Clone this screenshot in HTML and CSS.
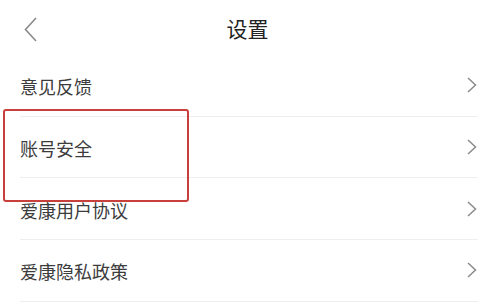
FILE: index.html
```html
<!DOCTYPE html>
<html lang="zh">
<head>
<meta charset="utf-8">
<link rel="stylesheet" href="styles.css">
</head>
<body>
<div class="page">
  <header class="header">
    <span class="back">
      <svg width="13" height="25" viewBox="0 0 13 25"><polyline points="12,1 1.5,12.5 12,24" fill="none" stroke="#8a8a8a" stroke-width="1.6"/></svg>
    </span>
    <h1 class="title">设置</h1>
  </header>
  <ul class="list">
    <li class="row"><span class="label">意见反馈</span><svg class="chev" width="10" height="16" viewBox="0 0 10 16"><polyline points="1,1 8.5,8 1,15" fill="none" stroke="#8a8a8a" stroke-width="1.5"/></svg></li>
    <li class="row"><span class="label">账号安全</span><svg class="chev" width="10" height="16" viewBox="0 0 10 16"><polyline points="1,1 8.5,8 1,15" fill="none" stroke="#8a8a8a" stroke-width="1.5"/></svg></li>
    <li class="row"><span class="label">爱康用户协议</span><svg class="chev" width="10" height="16" viewBox="0 0 10 16"><polyline points="1,1 8.5,8 1,15" fill="none" stroke="#8a8a8a" stroke-width="1.5"/></svg></li>
    <li class="row"><span class="label">爱康隐私政策</span><svg class="chev" width="10" height="16" viewBox="0 0 10 16"><polyline points="1,1 8.5,8 1,15" fill="none" stroke="#8a8a8a" stroke-width="1.5"/></svg></li>
  </ul>
  <div class="highlight"></div>
</div>
</body>
</html>
```
FILE: styles.css
```css
html, body {
  margin: 0;
  padding: 0;
  background: #ffffff;
}
body {
  font-family: "Noto Sans CJK SC", "Noto Sans", sans-serif;
  color: #333333;
}
.page {
  position: relative;
  width: 500px;
  height: 305px;
  overflow: hidden;
}
.header {
  height: 55px;
  display: flex;
  align-items: center;
  justify-content: center;
  position: relative;
}
.back {
  position: absolute;
  left: 24px;
  top: 17px;
  display: flex;
}
.title {
  margin: 0 5px 0 0;
  font-size: 21px;
  font-weight: 400;
  color: #222222;
  line-height: 1;
  padding-top: 2px;
}
.list {
  list-style: none;
  margin: 0 22px 0 20px;
  padding: 0;
}
.row {
  height: 60.67px;
  border-bottom: 1px solid #eeeeee;
  display: flex;
  align-items: center;
  justify-content: space-between;
}
.label {
  font-size: 18px;
  line-height: 1;
  color: #3c3c3c;
  padding-top: 2px;
}
.chev {
  margin-right: 1px;
  display: block;
}
.highlight {
  position: absolute;
  left: 3px;
  top: 109px;
  width: 182px;
  height: 89px;
  border: 2px solid #c8403c;
  border-radius: 3px;
}
```
